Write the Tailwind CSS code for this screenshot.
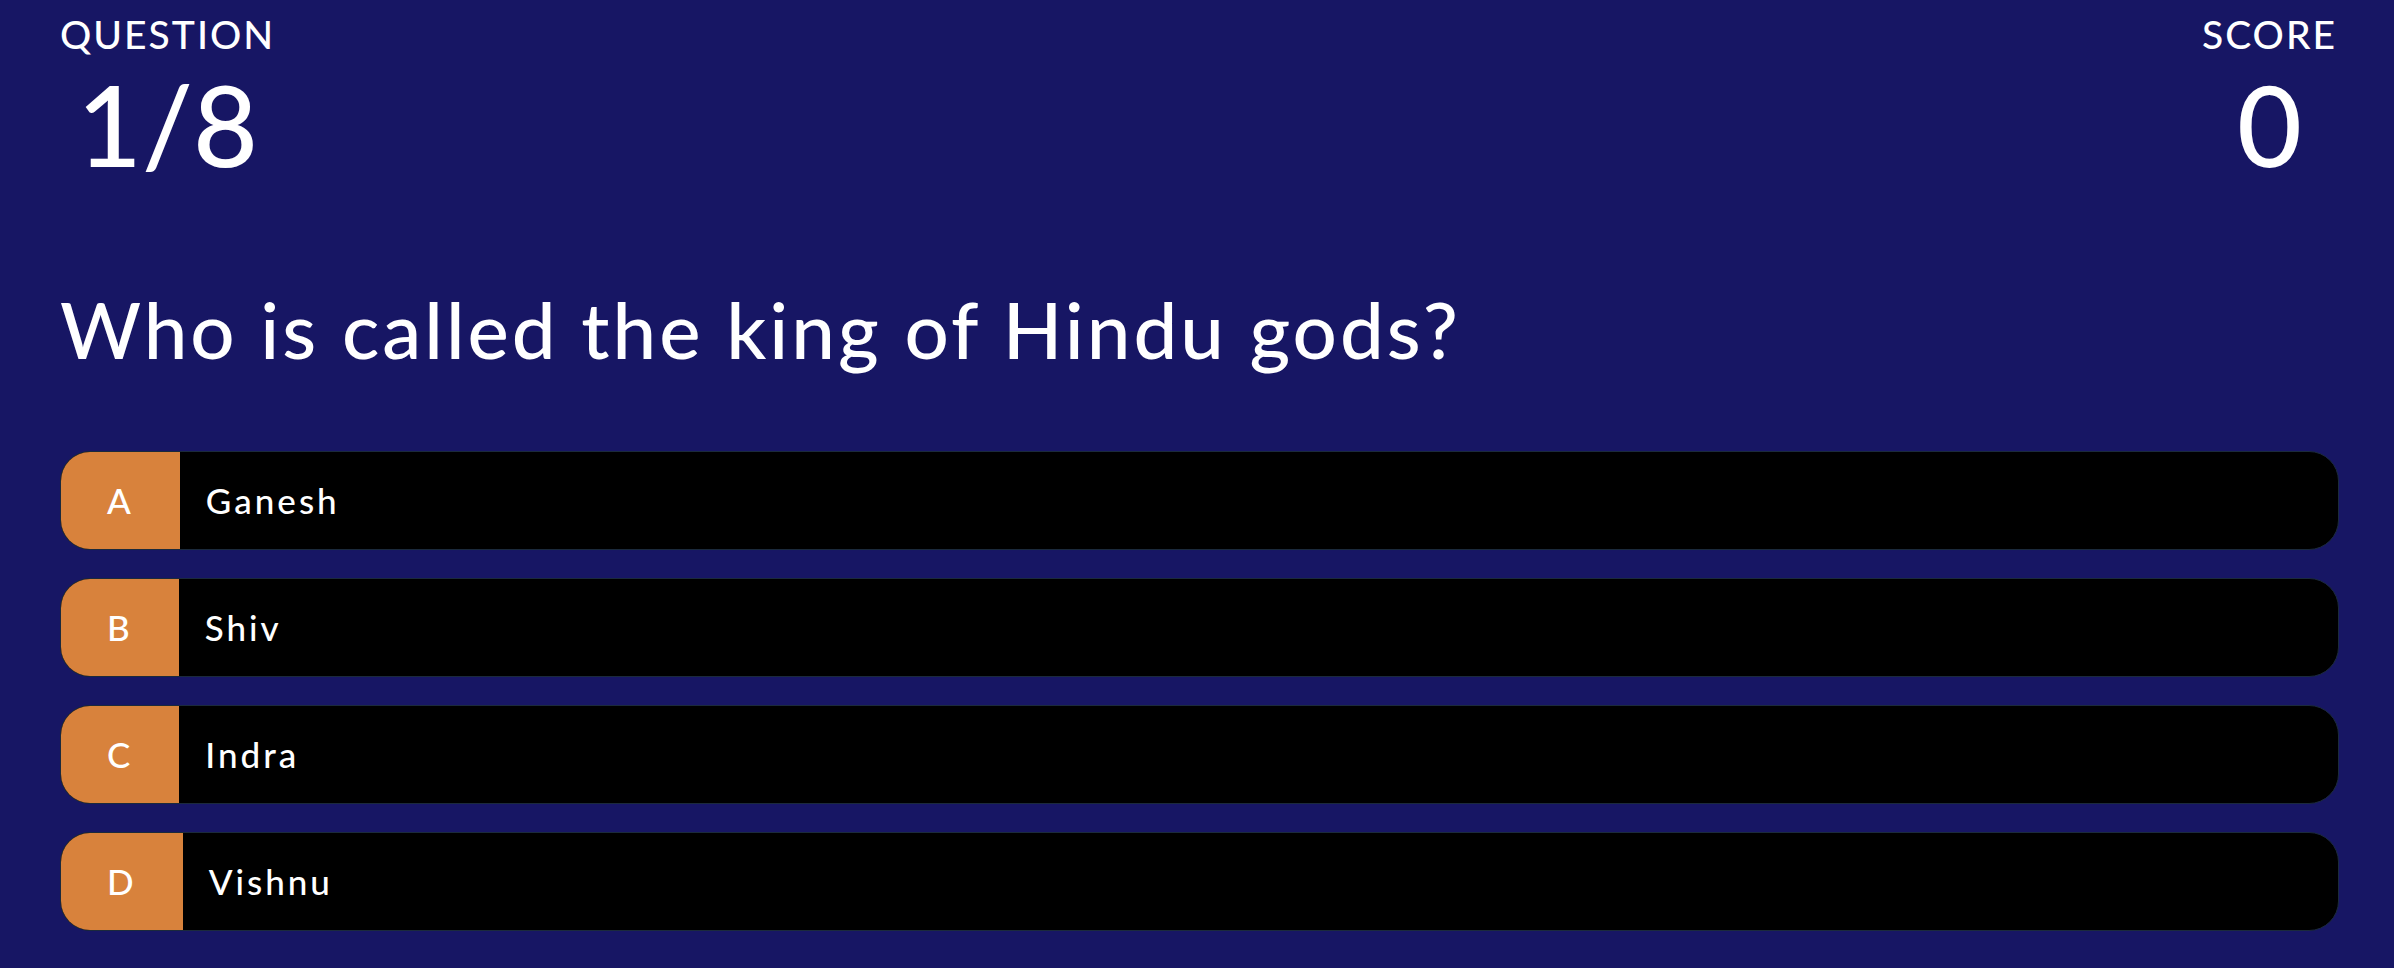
<!DOCTYPE html>
<html lang="en">
<head>
<meta charset="utf-8">
<title>Quiz</title>
<script src="https://cdn.jsdelivr.net/npm/@tailwindcss/browser@4"></script>
</head>
<body class="min-h-screen bg-[#171664] font-[Lato,sans-serif] font-medium text-white">
<main class="flex flex-col pt-[10px] pr-[55px] pb-9 pl-[60px]">
<header class="flex justify-between pr-[2px] text-center">
<div><p class="text-[39px] leading-[48px] tracking-[2px]">QUESTION</p><p class="text-[112px] leading-[132px]">1/8</p></div>
<div><p class="text-[39px] leading-[48px] tracking-[2px]">SCORE</p><p class="text-[112px] leading-[132px]">0</p></div>
</header>
<h1 class="mt-[91px] text-[78px] leading-[96px] tracking-[3px]">Who is called the king of Hindu gods?</h1>
<div class="mt-[74px] flex flex-col gap-7 text-[35px] leading-[49px] tracking-[3px]">
<button class="flex cursor-pointer overflow-hidden rounded-[30px] border border-[#1b2a3c] bg-black text-left"><span class="bg-[#d8823c] px-[46px] py-6">A</span><span class="px-[26px] py-6">Ganesh</span></button>
<button class="flex cursor-pointer overflow-hidden rounded-[30px] border border-[#1b2a3c] bg-black text-left"><span class="bg-[#d8823c] px-[46px] py-6">B</span><span class="px-[26px] py-6">Shiv</span></button>
<button class="flex cursor-pointer overflow-hidden rounded-[30px] border border-[#1b2a3c] bg-black text-left"><span class="bg-[#d8823c] px-[46px] py-6">C</span><span class="px-[26px] py-6">Indra</span></button>
<button class="flex cursor-pointer overflow-hidden rounded-[30px] border border-[#1b2a3c] bg-black text-left"><span class="bg-[#d8823c] px-[46px] py-6">D</span><span class="px-[26px] py-6">Vishnu</span></button>
</div>
</main>
</body>
</html>
